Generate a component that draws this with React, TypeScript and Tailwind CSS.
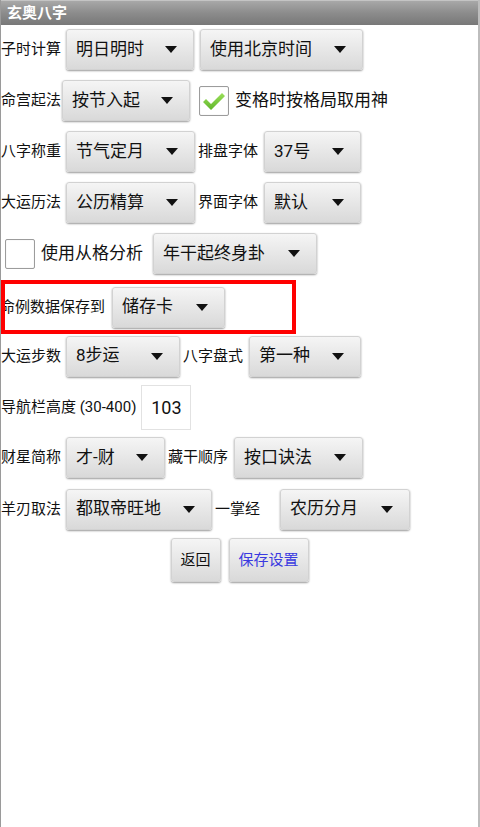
import React from 'react';

const font = { fontFamily: 'Roboto, "Noto Sans CJK SC", sans-serif' };

// Android-style spinner (dropdown button)
const Spinner: React.FC<{ text: string; className?: string }> = ({ text, className = '' }) => (
  <div
    className={`h-[41px] flex items-center justify-between pl-[9px] pr-[16px] rounded-[3px] border border-[#d2d2d2] bg-gradient-to-b from-[#f5f5f5] to-[#d9d9d9] shadow-[0_1px_2px_rgba(0,0,0,0.4)] text-[17px] text-[#111] ${className}`}
  >
    <span className="whitespace-nowrap">{text}</span>
    <svg width="12" height="7" viewBox="0 0 12 7" className="shrink-0">
      <polygon points="0,0 12,0 6,7" fill="#111" />
    </svg>
  </div>
);

const Label: React.FC<{ text: string; className?: string }> = ({ text, className = '' }) => (
  <span className={`text-[15px] text-[#111] whitespace-nowrap ${className}`}>{text}</span>
);

const CheckBox: React.FC<{ checked?: boolean; className?: string }> = ({ checked, className = '' }) => (
  <div className={`w-[30px] h-[30px] bg-white border border-[#9c9c9c] rounded-[2px] flex items-center justify-center shadow-[inset_0_0_1px_rgba(0,0,0,0.2)] ${className}`}>
    {checked && (
      <svg width="24" height="20" viewBox="0 0 24 20">
        <defs>
          <linearGradient id="chk" x1="0" y1="0" x2="0" y2="1">
            <stop offset="0" stopColor="#9be05a" />
            <stop offset="1" stopColor="#5fb52a" />
          </linearGradient>
        </defs>
        <path d="M1 11 L4 8 L9 13 L20 2 L23 5 L9 19 Z" fill="url(#chk)" />
      </svg>
    )}
  </div>
);

const Row: React.FC<{ className?: string; children: React.ReactNode }> = ({ className = '', children }) => (
  <div className={`flex items-center ${className}`}>{children}</div>
);

export default function App() {
  return (
    <div className="w-[480px] h-[827px] bg-white border-l border-l-[#9a9a9a] border-r-2 border-r-[#bdbdbd] overflow-hidden" style={font}>
      {/* Title bar */}
      <div className="h-[25px] flex items-center pl-[6px] bg-gradient-to-b from-[#a8a8a8] via-[#8c8c8c] to-[#787878] border-t border-t-[#c4c4c4]">
        <span className="text-[15px] font-bold text-white">玄奥八字</span>
      </div>

      <div className="pt-[4px] flex flex-col">
        <Row className="h-[41px]">
          <Label text="子时计算" className="ml-[0px]" />
          <Spinner text="明日明时" className="ml-[5px] w-[128px]" />
          <Spinner text="使用北京时间" className="ml-[6px] w-[163px]" />
        </Row>

        <Row className="h-[41px] mt-[10px]">
          <Label text="命宫起法" />
          <Spinner text="按节入起" className="ml-[1px] w-[128px]" />
          <CheckBox checked className="ml-[9px]" />
          <span className="ml-[6px] text-[17px] text-[#111] whitespace-nowrap">变格时按格局取用神</span>
        </Row>

        <Row className="h-[41px] mt-[10px]">
          <Label text="八字称重" />
          <Spinner text="节气定月" className="ml-[5px] w-[129px]" />
          <Label text="排盘字体" className="ml-[3px]" />
          <Spinner text="37号" className="ml-[6px] w-[97px]" />
        </Row>

        <Row className="h-[41px] mt-[10px]">
          <Label text="大运历法" />
          <Spinner text="公历精算" className="ml-[5px] w-[129px]" />
          <Label text="界面字体" className="ml-[3px]" />
          <Spinner text="默认" className="ml-[6px] w-[97px]" />
        </Row>

        <Row className="h-[41px] mt-[10px]">
          <CheckBox className="ml-[4px]" />
          <span className="ml-[6px] text-[17px] text-[#111] whitespace-nowrap">使用从格分析</span>
          <Spinner text="年干起终身卦" className="ml-[10px] w-[164px]" />
        </Row>

        {/* Highlighted row */}
        <div className="relative mt-[6px] h-[54px] w-[295px] flex items-center">
          <Label text="命例数据保存到" className="ml-[-1px] text-[14.5px]" />
          <Spinner text="储存卡" className="ml-[7px] w-[113px] h-[41px]" />
          <div className="absolute inset-0 border-4 border-[#ff0000] pointer-events-none" />
        </div>

        <Row className="h-[42px] mt-[1px]">
          <Label text="大运步数" />
          <Spinner text="8步运" className="ml-[5px] w-[114px]" />
          <Label text="八字盘式" className="ml-[3px]" />
          <Spinner text="第一种" className="ml-[6px] w-[112px]" />
        </Row>

        <Row className="h-[45px] mt-[8px]">
          <span className="text-[15px] text-[#111] whitespace-nowrap">导航栏高度 (30-400)</span>
          <div className="ml-[5px] w-[50px] h-[45px] border border-[#e2e2e2] bg-white flex items-center justify-center text-[18px] text-[#111]">
            103
          </div>
        </Row>

        <Row className="h-[41px] mt-[7px]">
          <Label text="财星简称" />
          <Spinner text="才-财" className="ml-[5px] w-[99px]" />
          <Label text="藏干顺序" className="ml-[3px]" />
          <Spinner text="按口诀法" className="ml-[6px] w-[129px]" />
        </Row>

        <Row className="h-[42px] mt-[10px]">
          <Label text="羊刃取法" />
          <Spinner text="都取帝旺地" className="ml-[5px] w-[146px]" />
          <Label text="一掌经" className="ml-[3px]" />
          <Spinner text="农历分月" className="ml-[20px] w-[130px]" />
        </Row>

        <Row className="h-[44px] mt-[8px] justify-center">
          <button className="h-[44px] w-[50px] rounded-[3px] border border-[#d2d2d2] bg-gradient-to-b from-[#f5f5f5] to-[#d9d9d9] shadow-[0_1px_2px_rgba(0,0,0,0.4)] text-[15px] text-[#111]">
            返回
          </button>
          <button className="ml-[8px] h-[44px] w-[80px] rounded-[3px] border border-[#d2d2d2] bg-gradient-to-b from-[#f5f5f5] to-[#d9d9d9] shadow-[0_1px_2px_rgba(0,0,0,0.4)] text-[15px] text-[#3a3ae0]">
            保存设置
          </button>
        </Row>
      </div>
    </div>
  );
}
